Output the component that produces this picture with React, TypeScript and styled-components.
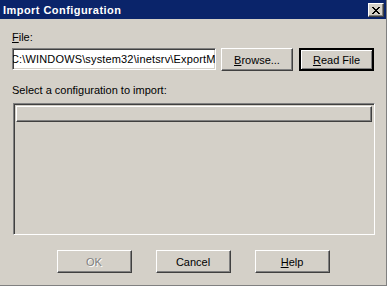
import React from 'react';
import styled, { createGlobalStyle, css } from 'styled-components';

const face = '#d4d0c8';
const shadow = '#808080';
const darkShadow = '#404040';

const GlobalStyle = createGlobalStyle`
  html, body {
    margin: 0;
    padding: 0;
    background: ${face};
  }
  body {
    font-family: 'Liberation Sans', Arial, sans-serif;
    font-size: 11px;
    color: #000;
  }
`;

const Window = styled.div`
  box-sizing: border-box;
  width: 387px;
  height: 286px;
  background: ${face};
  display: flex;
  flex-direction: column;
  border-right: 1px solid ${shadow};
  border-bottom: 1px solid ${shadow};
  overflow: hidden;
`;

const TitleBar = styled.div`
  height: 19px;
  background: #0a246a;
  display: flex;
  align-items: center;
  justify-content: space-between;
  padding: 0 2px 0 3px;
  flex: none;
`;

const Title = styled.span`
  color: #fff;
  font-weight: bold;
  font-size: 11px;
  letter-spacing: 0.45px;
`;

const bevel = css`
  border: 1px solid;
  border-color: #fff ${darkShadow} ${darkShadow} #fff;
  box-shadow: inset -1px -1px 0 ${shadow};
  background: ${face};
`;

const CloseButton = styled.button`
  ${bevel};
  box-sizing: border-box;
  width: 16px;
  height: 14px;
  padding: 0;
  margin-top: 1px;
  display: flex;
  align-items: center;
  justify-content: center;
`;

const Body = styled.div`
  flex: 1;
  display: flex;
  flex-direction: column;
  padding: 12px 11px 0 12px;
`;

const Label = styled.div<{ $gap?: number }>`
  height: 13px;
  line-height: 13px;
  margin-top: ${({ $gap }) => $gap ?? 0}px;
  white-space: nowrap;
`;

const FileRow = styled.div`
  margin-top: 4px;
  display: flex;
  align-items: flex-start;
  height: 23px;
`;

const sunken = css`
  border: 1px solid;
  border-color: ${shadow} #fff #fff ${shadow};
  box-shadow: inset 1px 1px 0 ${darkShadow}, inset -1px -1px 0 ${face};
`;

const PathField = styled.div`
  ${sunken};
  box-sizing: border-box;
  width: 204px;
  height: 22px;
  background: #fff;
  overflow: hidden;
  white-space: nowrap;
  padding: 4px 2px 0 2px;
  line-height: 13px;
`;

// the field is scrolled a little, so the drive letter is half hidden
const PathText = styled.span`
  display: inline-block;
  margin-left: -4px;
  letter-spacing: 0.15px;
`;

const Button = styled.button<{ $default?: boolean; $width?: number }>`
  box-sizing: border-box;
  width: ${({ $width }) => $width ?? 75}px;
  height: 23px;
  padding: 0;
  font-family: inherit;
  font-size: 11px;
  color: #000;
  ${bevel};
  ${({ $default }) =>
    $default &&
    css`
      border-width: 2px;
      border-color: #000;
      box-shadow: inset 1px 1px 0 #fff, inset -1px -1px 0 ${shadow};
    `}
  &:disabled {
    color: ${shadow};
    text-shadow: 1px 1px 0 #fff;
  }
`;

const Key = styled.span`
  text-decoration: underline;
  text-underline-offset: 1px;
`;

const ListBox = styled.div`
  ${sunken};
  box-sizing: border-box;
  margin-top: 6px;
  margin-left: 1px;
  width: 362px;
  height: 132px;
  padding: 2px;
  background: ${face};
`;

const ListHeader = styled.div`
  ${bevel};
  box-sizing: border-box;
  height: 16px;
`;

const ButtonRow = styled.div`
  margin-top: 15px;
  display: flex;
  justify-content: center;
  gap: 24px;
  padding-right: 1px;
`;

const CloseGlyph = () => (
  <svg width="8" height="7" viewBox="0 0 8 7" shapeRendering="crispEdges">
    {[0, 1, 2, 3, 4, 5, 6].map((i) => (
      <React.Fragment key={i}>
        <rect x={i} y={i} width="2" height="1" fill="#000" />
        <rect x={6 - i} y={i} width="2" height="1" fill="#000" />
      </React.Fragment>
    ))}
  </svg>
);

export default function App() {
  return (
    <>
      <GlobalStyle />
      <Window>
        <TitleBar>
          <Title>Import Configuration</Title>
          <CloseButton aria-label="Close">
            <CloseGlyph />
          </CloseButton>
        </TitleBar>
        <Body>
          <Label>
            <Key>F</Key>ile:
          </Label>
          <FileRow>
            <PathField>
              <PathText>C:\WINDOWS\system32\inetsrv\ExportMetabase.xml</PathText>
            </PathField>
            <Button $width={72} style={{ marginLeft: 5 }}>
              <Key>B</Key>rowse...
            </Button>
            <Button $default style={{ marginLeft: 6 }}>
              <Key>R</Key>ead File
            </Button>
          </FileRow>
          <Label $gap={13}>Select a configuration to import:</Label>
          <ListBox>
            <ListHeader />
          </ListBox>
          <ButtonRow>
            <Button disabled>OK</Button>
            <Button>Cancel</Button>
            <Button>
              <Key>H</Key>elp
            </Button>
          </ButtonRow>
        </Body>
      </Window>
    </>
  );
}
